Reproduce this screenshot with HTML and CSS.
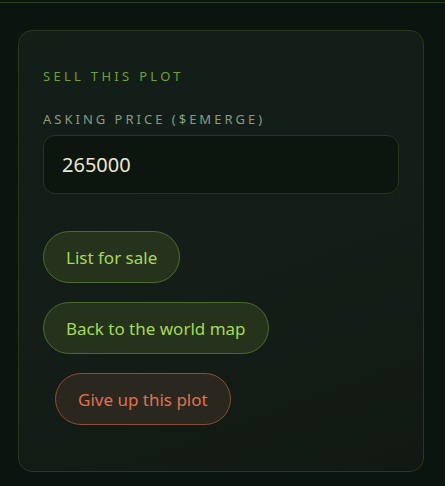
FILE: index.html
```html
<!DOCTYPE html>
<html lang="en">
<head>
    <meta charset="UTF-8">
    <meta name="viewport" content="width=device-width, initial-scale=1.0">
    <title>Sell this plot</title>
    <link rel="stylesheet" href="styles.css">
</head>
<body>
    <div class="topbar"></div>

    <div class="panel">
        <!-- Sell form -->
        <h2 class="panel-title">Sell this plot</h2>

        <label class="field-label" for="price">Asking price ($EMERGE)</label>
        <input class="field-input" type="text" id="price" value="265000">

        <div class="actions">
            <button class="pill">List for sale</button>
            <button class="pill">Back to the world map</button>
            <button class="pill pill-danger">Give up this plot</button>
        </div>
    </div>
</body>
</html>
```

FILE: styles.css
```css
/* Styles for the page */
body {
    font-family: 'Noto Sans', 'Open Sans', sans-serif;
    background: #0b150f;
    margin: 0;
    padding: 0;
    color: #e8e4d0;
}

.topbar {
    height: 2px;
    border-bottom: 1px solid #2b3d20;
    margin-bottom: 27px;
}

.panel {
    display: flex;
    flex-direction: column;
    align-items: flex-start;
    margin: 0 21px 0 18px;
    padding: 36px 24px 46px;
    border: 1px solid #28391e;
    border-radius: 14px;
    background: linear-gradient(160deg, #131e17 0%, #141d17 50%, #111912 100%);
}

.panel-title {
    margin: 0 0 25px;
    font-size: 13px;
    font-weight: 400;
    line-height: 18px;
    letter-spacing: 3.3px;
    text-transform: uppercase;
    color: #6f9d3c;
}

.field-label {
    display: block;
    margin-bottom: 7px;
    font-size: 13px;
    line-height: 18px;
    letter-spacing: 3px;
    text-transform: uppercase;
    color: #8a9a82;
}

.field-input {
    width: 100%;
    height: 59px;
    box-sizing: border-box;
    padding: 0 18px;
    border: 1px solid #25361c;
    border-radius: 12px;
    background: #0d150f;
    color: #ebe6d2;
    font-family: inherit;
    font-size: 20px;
}

.field-input:focus {
    outline: none;
}

.actions {
    display: flex;
    flex-direction: column;
    align-items: flex-start;
    gap: 19px;
    margin-top: 37px;
}

.pill {
    height: 52px;
    padding: 0 22px;
    border: 1px solid #4a6a2c;
    border-radius: 26px;
    background: #25331c;
    color: #a6d85c;
    font-family: inherit;
    font-size: 17px;
    cursor: pointer;
}

.pill-danger {
    margin-left: 12px;
    border-color: #8c4c3a;
    background: #2a271e;
    color: #e0704f;
}
```
